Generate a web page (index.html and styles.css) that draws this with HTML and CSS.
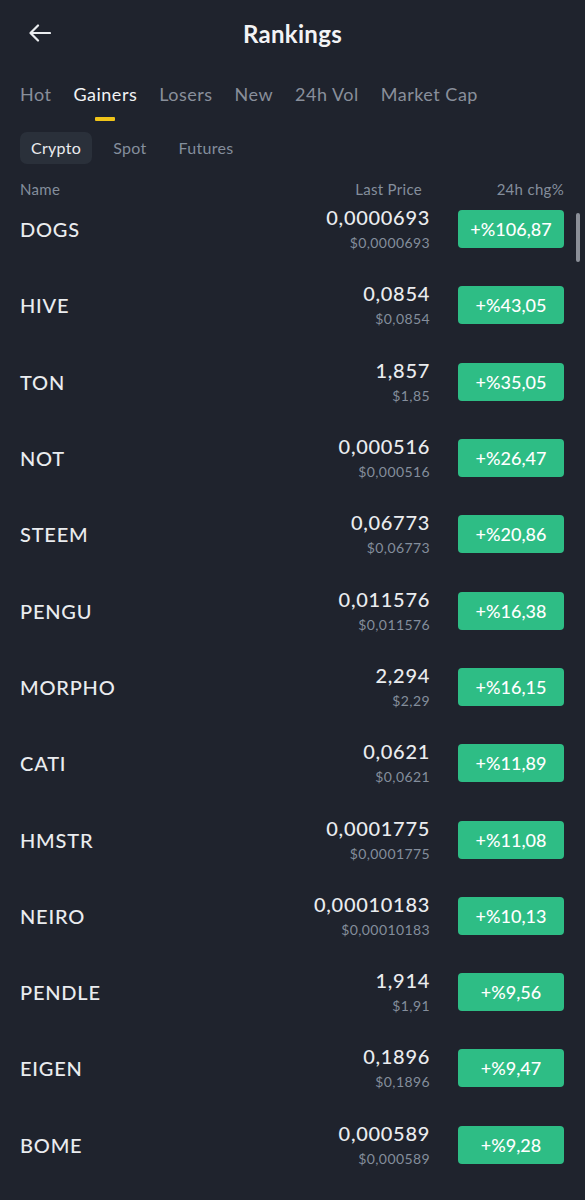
FILE: index.html
```html
<!DOCTYPE html>
<html lang="en">
<head>
<meta charset="UTF-8">
<meta name="viewport" content="width=device-width, initial-scale=1.0">
<title>Rankings</title>
<link rel="stylesheet" href="styles.css">
</head>
<body>
<div class="page">
    <div class="topbar">
        <svg class="back" width="22" height="18" viewBox="0 0 22 18">
            <path d="M21 9H2M9 1.5L1.5 9L9 16.5" fill="none" stroke="#eaecef" stroke-width="2.2" stroke-linecap="round" stroke-linejoin="round"/>
        </svg>
        <h1>Rankings</h1>
    </div>

    <div class="tabs">
        <span>Hot</span>
        <span class="active">Gainers</span>
        <span>Losers</span>
        <span>New</span>
        <span>24h Vol</span>
        <span>Market Cap</span>
    </div>

    <div class="subtabs">
        <span class="pill">Crypto</span>
        <span>Spot</span>
        <span>Futures</span>
    </div>

    <div class="head">
        <span class="col-name">Name</span>
        <span class="col-price">Last Price</span>
        <span class="col-chg">24h chg%</span>
    </div>

    <div class="list">
        <div class="scrollbar"></div>

        <div class="row">
            <div class="name">DOGS</div>
            <div class="price"><b>0,0000693</b><small>$0,0000693</small></div>
            <div class="chg">+%106,87</div>
        </div>
        <div class="row">
            <div class="name">HIVE</div>
            <div class="price"><b>0,0854</b><small>$0,0854</small></div>
            <div class="chg">+%43,05</div>
        </div>
        <div class="row">
            <div class="name">TON</div>
            <div class="price"><b>1,857</b><small>$1,85</small></div>
            <div class="chg">+%35,05</div>
        </div>
        <div class="row">
            <div class="name">NOT</div>
            <div class="price"><b>0,000516</b><small>$0,000516</small></div>
            <div class="chg">+%26,47</div>
        </div>
        <div class="row">
            <div class="name">STEEM</div>
            <div class="price"><b>0,06773</b><small>$0,06773</small></div>
            <div class="chg">+%20,86</div>
        </div>
        <div class="row">
            <div class="name">PENGU</div>
            <div class="price"><b>0,011576</b><small>$0,011576</small></div>
            <div class="chg">+%16,38</div>
        </div>
        <div class="row">
            <div class="name">MORPHO</div>
            <div class="price"><b>2,294</b><small>$2,29</small></div>
            <div class="chg">+%16,15</div>
        </div>
        <div class="row">
            <div class="name">CATI</div>
            <div class="price"><b>0,0621</b><small>$0,0621</small></div>
            <div class="chg">+%11,89</div>
        </div>
        <div class="row">
            <div class="name">HMSTR</div>
            <div class="price"><b>0,0001775</b><small>$0,0001775</small></div>
            <div class="chg">+%11,08</div>
        </div>
        <div class="row">
            <div class="name">NEIRO</div>
            <div class="price"><b>0,00010183</b><small>$0,00010183</small></div>
            <div class="chg">+%10,13</div>
        </div>
        <div class="row">
            <div class="name">PENDLE</div>
            <div class="price"><b>1,914</b><small>$1,91</small></div>
            <div class="chg">+%9,56</div>
        </div>
        <div class="row">
            <div class="name">EIGEN</div>
            <div class="price"><b>0,1896</b><small>$0,1896</small></div>
            <div class="chg">+%9,47</div>
        </div>
        <div class="row">
            <div class="name">BOME</div>
            <div class="price"><b>0,000589</b><small>$0,000589</small></div>
            <div class="chg">+%9,28</div>
        </div>
    </div>
</div>
</body>
</html>
```

FILE: styles.css
```css
body {
    margin: 0;
    padding: 0;
    background-color: #1f232d;
    font-family: Lato, "Open Sans", sans-serif;
    color: #eaecef;
}

.page {
    width: 585px;
    height: 1200px;
    overflow: hidden;
}

.topbar {
    position: relative;
    height: 67px;
    display: flex;
    align-items: center;
    justify-content: center;
}

.back {
    position: absolute;
    left: 29px;
    top: 24px;
}

.topbar h1 {
    margin: 0;
    font-size: 24px;
    font-weight: 700;
    letter-spacing: 0.3px;
    color: #f2f3f5;
}

.tabs {
    display: flex;
    gap: 22px;
    padding: 15px 20px 0 20px;
    height: 43px;
    font-size: 18px;
    line-height: 24px;
    letter-spacing: 0.5px;
    color: #898f9b;
}

.tabs span {
    position: relative;
}

.tabs .active {
    color: #f2f3f5;
}

.tabs .active::after {
    content: "";
    position: absolute;
    left: 50%;
    top: 35px;
    width: 20px;
    height: 4px;
    margin-left: -10px;
    border-radius: 1px;
    background-color: #f0c419;
}

.subtabs {
    display: flex;
    align-items: center;
    gap: 10px;
    padding: 7px 0 0 20px;
    height: 32px;
    font-size: 16px;
    letter-spacing: 0.3px;
    color: #848e9c;
}

.subtabs span {
    padding: 0 11px;
    line-height: 32px;
}

.subtabs .pill {
    background-color: #2a303a;
    border-radius: 7px;
    color: #eaecef;
}

.head {
    display: flex;
    align-items: center;
    height: 20px;
    margin-top: 15px;
    margin-bottom: -8px;
    padding: 0 21px 0 20px;
    font-size: 15px;
    letter-spacing: 0.3px;
    color: #848e9c;
}

.col-name {
    flex: 1;
}

.col-price {
    width: 200px;
    text-align: right;
    margin-right: 8px;
}

.col-chg {
    width: 134px;
    text-align: right;
}

.list {
    position: relative;
}

.scrollbar {
    position: absolute;
    right: 5px;
    top: 22px;
    width: 4px;
    height: 49px;
    border-radius: 2px;
    background-color: #8b8f98;
}

.row {
    display: flex;
    align-items: center;
    height: 76.3px;
    padding: 0 21px 0 20px;
}

.name {
    flex: 1;
    font-size: 20px;
    font-weight: 500;
    letter-spacing: 0.8px;
    color: #eaecef;
}

.price {
    display: flex;
    flex-direction: column;
    align-items: flex-end;
    margin-right: 28px;
}

.price b {
    font-size: 20px;
    font-weight: 500;
    line-height: 24px;
    letter-spacing: 0.7px;
    color: #eaecef;
}

.price small {
    font-size: 14px;
    line-height: 20px;
    margin-top: 4px;
    letter-spacing: 0.4px;
    color: #848e9c;
}

.chg {
    width: 106px;
    height: 38px;
    border-radius: 4px;
    background-color: #2ebd85;
    color: #ffffff;
    font-size: 18px;
    font-weight: 500;
    display: flex;
    align-items: center;
    justify-content: center;
}
```
